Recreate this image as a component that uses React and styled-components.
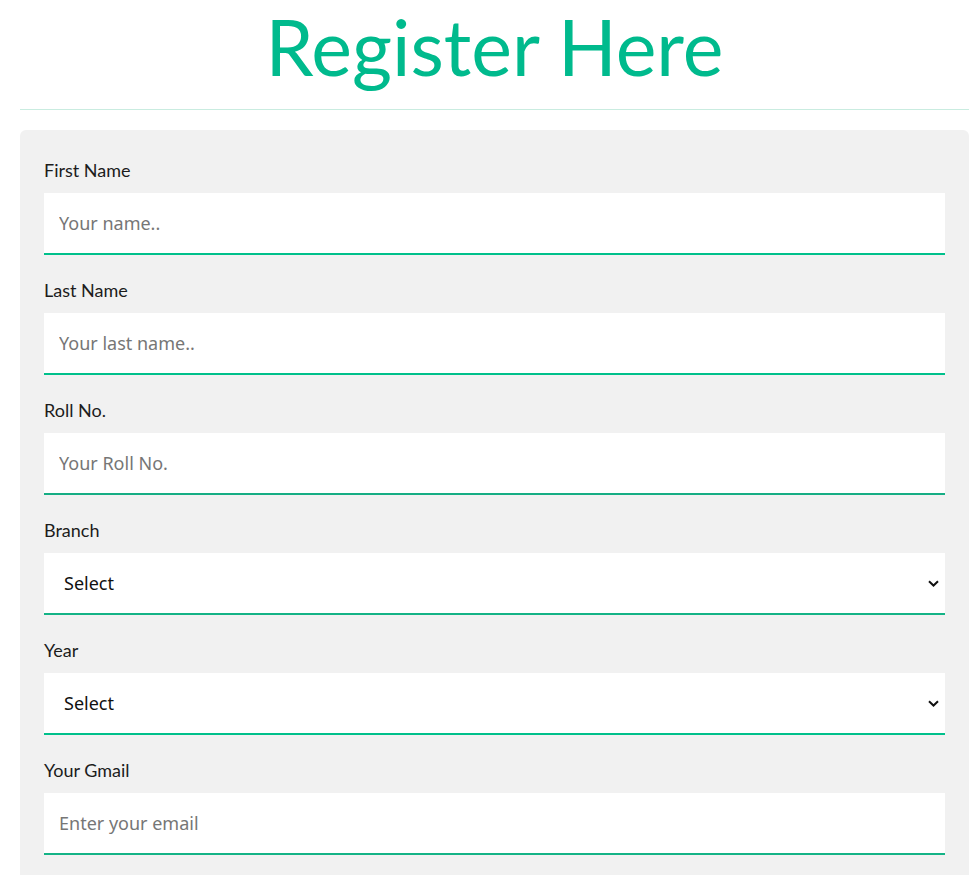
import React from 'react';
import styled, { createGlobalStyle } from 'styled-components';

const GlobalStyle = createGlobalStyle`
  html, body {
    margin: 0;
    padding: 0;
    background: #ffffff;
  }
  body {
    font-family: Lato, "Liberation Sans", sans-serif;
  }
  * {
    box-sizing: border-box;
  }
`;

const Page = styled.div`
  padding: 0 11px 0 20px;
`;

const Header = styled.header`
  display: flex;
  justify-content: center;
  height: 109px;
`;

const Title = styled.h1`
  margin: 0;
  font-family: Lato, "Liberation Sans", sans-serif;
  font-weight: 400;
  font-size: 77px;
  line-height: 92px;
  color: #00ba8d;
`;

const Divider = styled.hr`
  margin: 0 0 20px;
  border: 0;
  border-top: 1px solid #c9ece0;
`;

const Card = styled.form`
  background: #f1f1f1;
  border-radius: 6px;
  padding: 28px 24px 24px;
`;

const Field = styled.div`
  margin-bottom: 23px;
`;

const Label = styled.label`
  display: block;
  margin-bottom: 11px;
  font-family: Lato, "Liberation Sans", sans-serif;
  font-size: 18px;
  line-height: 24px;
  color: #1c1c1c;
`;

const Control = styled.div`
  position: relative;
  height: 62px;
  background: #ffffff;
  border-bottom: 2px solid ${props => props.$line || '#00c08b'};
`;

const Input = styled.input`
  display: block;
  width: 100%;
  height: 60px;
  padding: 0 15px;
  border: none;
  border-radius: 0;
  background: transparent;
  font-family: "Noto Sans", "Open Sans", sans-serif;
  font-size: 18px;
  color: #222;
  outline: none;

  &::placeholder {
    color: #767676;
  }
`;

const Select = styled.select`
  display: block;
  width: 100%;
  height: 60px;
  padding: 0 20px;
  border: none;
  border-radius: 0;
  background: transparent;
  appearance: none;
  font-family: "Noto Sans", "Open Sans", sans-serif;
  font-size: 18px;
  color: #111;
  outline: none;
`;

const Chevron = styled.svg`
  position: absolute;
  right: 6px;
  top: 27px;
  width: 11px;
  height: 7px;
  pointer-events: none;
`;

const fields = [
  { label: 'First Name', placeholder: 'Your name..' },
  { label: 'Last Name', placeholder: 'Your last name..' },
  { label: 'Roll No.', placeholder: 'Your Roll No.', line: '#16ad84' },
  { label: 'Branch', select: true, line: '#14b386' },
  { label: 'Year', select: true },
  { label: 'Your Gmail', placeholder: 'Enter your email', line: '#14b386' }
];

export default function App() {
  return (
    <Page>
      <GlobalStyle />
      <Header>
        <Title>Register Here</Title>
      </Header>
      <Divider />
      <Card onSubmit={e => e.preventDefault()}>
        {fields.map(f => (
          <Field key={f.label}>
            <Label>{f.label}</Label>
            <Control $line={f.line}>
              {f.select ? (
                <>
                  <Select defaultValue="">
                    <option value="">Select</option>
                  </Select>
                  <Chevron viewBox="0 0 11 7">
                    <path d="M1 1.2 L5.5 5.5 L10 1.2" fill="none" stroke="#111" strokeWidth="2" />
                  </Chevron>
                </>
              ) : (
                <Input placeholder={f.placeholder} />
              )}
            </Control>
          </Field>
        ))}
      </Card>
    </Page>
  );
}
